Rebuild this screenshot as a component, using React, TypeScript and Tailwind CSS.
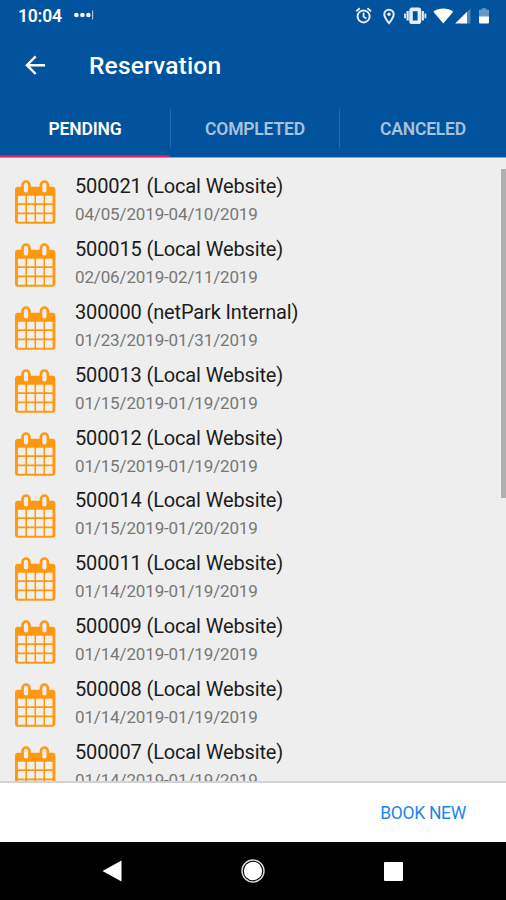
import React from "react";

type Reservation = {
  id: string;
  source: string;
  dates: string;
};

const reservations: Reservation[] = [
  { id: "500021", source: "Local Website", dates: "04/05/2019-04/10/2019" },
  { id: "500015", source: "Local Website", dates: "02/06/2019-02/11/2019" },
  { id: "300000", source: "netPark Internal", dates: "01/23/2019-01/31/2019" },
  { id: "500013", source: "Local Website", dates: "01/15/2019-01/19/2019" },
  { id: "500012", source: "Local Website", dates: "01/15/2019-01/19/2019" },
  { id: "500014", source: "Local Website", dates: "01/15/2019-01/20/2019" },
  { id: "500011", source: "Local Website", dates: "01/14/2019-01/19/2019" },
  { id: "500009", source: "Local Website", dates: "01/14/2019-01/19/2019" },
  { id: "500008", source: "Local Website", dates: "01/14/2019-01/19/2019" },
  { id: "500007", source: "Local Website", dates: "01/14/2019-01/19/2019" },
];

const CalendarIcon = () => (
  <svg width="41" height="44" viewBox="0 0 41 44" className="shrink-0">
    <rect x="0" y="6.8" width="40.4" height="37" rx="3" fill="#ff9810" />
    {[11, 29.4].map((x) => (
      <g key={x}>
        <rect x={x - 4.8} y="0.3" width="9.6" height="14" rx="4.8" fill="#ff9810" />
        <rect x={x - 2.1} y="2.8" width="4.2" height="9.8" rx="2.1" fill="#eeeeee" />
      </g>
    ))}
    {[15.7, 25, 34.2].map((y) =>
      [2.9, 12, 21, 30].map((x) => (
        <rect key={`${x}-${y}`} x={x} y={y} width="7.5" height="7.5" rx="0.4" fill="#f1efec" />
      ))
    )}
  </svg>
);

const StatusBar = () => (
  <div className="flex h-8 shrink-0 items-center justify-between pl-[18px] pr-[16px] text-white">
    <div className="flex items-center">
      <span className="text-[17.5px] font-semibold leading-8 tracking-[-0.2px]">10:04</span>
      <svg width="20" height="10" viewBox="0 0 20 10" className="mb-[2px] ml-[12px]">
        <circle cx="2.4" cy="5" r="2.3" fill="#fff" />
        <circle cx="8.4" cy="5" r="2.3" fill="#fff" />
        <circle cx="14.4" cy="5" r="2.3" fill="#fff" />
        <path d="M18.6 0.5v9" stroke="#a9c4de" strokeWidth="1.2" />
      </svg>
    </div>
    <svg width="135" height="20" viewBox="0 0 135 20" fill="none" stroke="#e4edf6" strokeWidth="2">
      {/* alarm */}
      <circle cx="8.6" cy="10.4" r="6" />
      <path d="M8.6 6.5v4.2l2.8 1.7M1.2 5.2l3.6-3M16 5.2l-3.6-3" strokeWidth="1.8" />
      {/* location */}
      <path d="M34 17.2c-2.6-3.4-4.7-6-4.7-8.8a4.7 4.7 0 0 1 9.4 0c0 2.8-2.1 5.4-4.7 8.8z" />
      <circle cx="34" cy="8.3" r="1.8" fill="#e4edf6" stroke="none" />
      {/* vibrate */}
      <rect x="56" y="3.4" width="8.4" height="12.8" rx="1" strokeWidth="3.6" />
      <path d="M52.6 5v9.6M67.8 5v9.6" strokeWidth="2.2" />
      <path d="M50 7.6v4.6M70.4 7.6v4.6" strokeWidth="1.8" />
      {/* wifi */}
      <path d="M78.4 5.8C84 1.4 92.6 1.4 98.2 5.8L88.3 17.6z" fill="#fff" stroke="none" />
      {/* signal */}
      <path d="M115.5 2.5v14.9h-5V7.5z" fill="#4d86b8" stroke="none" />
      <path d="M112 5.7v11.7h-11.8z" fill="#fff" stroke="none" />
      {/* battery */}
      <path d="M124 3.8h2.8V2.3h4.4v1.5h2.8V11h-10z" fill="#6799c4" stroke="none" />
      <path d="M124 10.5h10v5.9a1 1 0 0 1-1 1h-8a1 1 0 0 1-1-1z" fill="#fff" stroke="none" />
    </svg>
  </div>
);

const AppBar = () => (
  <div className="flex h-[68px] shrink-0 items-center pl-[25px] text-white">
    <svg width="21" height="20" viewBox="0 0 21 20" fill="none" stroke="#fff" strokeWidth="2.4" className="-mt-[3px]">
      <path d="M20.1 10.2H2.2M10.7 1.4L1.9 10.2l8.8 8.8" />
    </svg>
    <h1 className="ml-[43px] text-[24.5px] font-medium leading-[68px] tracking-[0.18px]">Reservation</h1>
  </div>
);

const Tabs = () => (
  <div className="grid h-[58px] shrink-0 grid-cols-[170px_169px_167px] border-b border-[#8ba5c5] text-[17.5px] font-semibold tracking-[-0.2px] text-[#a6c2dd]">
    <div className="flex items-center justify-center border-b-2 border-[#e0195c] pt-[3px] text-white">PENDING</div>
    <div className="flex items-center">
      <span className="mb-px h-[39px] w-px bg-[#276bab]" />
      <span className="flex-1 pt-[2px] text-center">COMPLETED</span>
    </div>
    <div className="flex items-center">
      <span className="mb-px h-[39px] w-px bg-[#276bab]" />
      <span className="flex-1 pt-[2px] text-center">CANCELED</span>
    </div>
  </div>
);

const App = () => {
  return (
    <div className="flex h-[900px] w-[506px] flex-col overflow-hidden bg-[#eeeeee] font-['Roboto',sans-serif]">
      <header className="flex flex-col bg-[#01539d]">
        <StatusBar />
        <AppBar />
        <Tabs />
      </header>

      <main className="flex min-h-0 flex-1 justify-between overflow-hidden">
        <ul className="pl-[15px] pt-[13.4px]">
          {reservations.map((item) => (
            <li key={item.id} className="flex h-[62.8px] items-start">
              <div className="pt-[9px]">
                <CalendarIcon />
              </div>
              <div className="ml-[19px] whitespace-nowrap">
                <p className="text-[20px] leading-[30px] tracking-[-0.14px] text-[#1c1c1c]">
                  {item.id} ({item.source})
                </p>
                <p className="text-[17px] leading-[27px] tracking-[-0.14px] text-[#777777]">{item.dates}</p>
              </div>
            </li>
          ))}
        </ul>
        <div className="mt-[11px] h-[329px] w-[5px] bg-[#b0b0b0]" />
      </main>

      <footer className="flex h-[61px] shrink-0 items-center justify-end border-t-2 border-[#d2d2d2] bg-white pr-[40px] pt-px">
        <button className="text-[17.5px] tracking-[-0.3px] text-[#1b86ee]">BOOK NEW</button>
      </footer>

      <nav className="flex h-[58px] shrink-0 items-center bg-black pl-[102px]">
        <svg width="20" height="22" viewBox="0 0 20 22">
          <path d="M0.5 11L19.5 0.5v21z" fill="#fff" />
        </svg>
        <svg width="24" height="24" viewBox="0 0 24 24" className="ml-[119px]">
          <circle cx="12" cy="12" r="11" fill="none" stroke="#ddd" strokeWidth="1.4" />
          <circle cx="12" cy="12" r="9.2" fill="#fff" />
        </svg>
        <span className="ml-[119px] size-[19px] rounded-[1px] bg-white" />
      </nav>
    </div>
  );
};

export default App;
